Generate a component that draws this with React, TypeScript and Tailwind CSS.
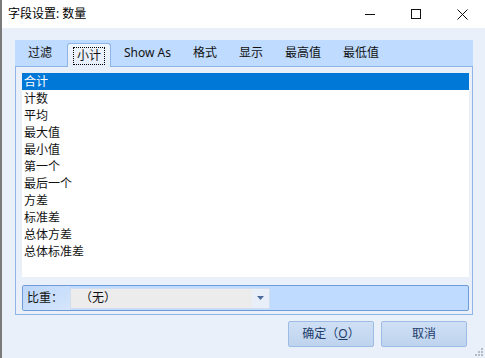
import React from "react";

const items = [
  "合计",
  "计数",
  "平均",
  "最大值",
  "最小值",
  "第一个",
  "最后一个",
  "方差",
  "标准差",
  "总体方差",
  "总体标准差",
];

const tabs = ["过滤", "小计", "Show As", "格式", "显示", "最高值", "最低值"];

function TitleBar() {
  return (
    <div className="h-[28px] bg-white flex items-center shrink-0">
      <span className="pl-[6px] text-[12px] leading-[16px] text-black">字段设置: 数量</span>
      <div className="ml-auto flex items-center h-full">
        <div className="w-[46px] h-full flex items-center justify-center">
          <svg width="10" height="10" viewBox="0 0 10 10">
            <line x1="0" y1="5.5" x2="10" y2="5.5" stroke="#111" strokeWidth="1" />
          </svg>
        </div>
        <div className="w-[46px] h-full flex items-center justify-center">
          <svg width="10" height="10" viewBox="0 0 10 10">
            <rect x="0.5" y="0.5" width="9" height="9" fill="none" stroke="#111" strokeWidth="1" />
          </svg>
        </div>
        <div className="w-[46px] h-full flex items-center justify-center">
          <svg width="11" height="11" viewBox="0 0 11 11">
            <path d="M0.5 0.5 L10.5 10.5 M10.5 0.5 L0.5 10.5" stroke="#111" strokeWidth="1" />
          </svg>
        </div>
      </div>
    </div>
  );
}

function TabStrip() {
  return (
    <div className="h-[26px] bg-[#bfdbff] flex items-end pl-[2px]">
      {tabs.map((t, i) =>
        i === 1 ? (
          <div
            key={t}
            className="ml-[4px] mr-[2px] h-[24px] mb-[-1px] px-[5px] flex items-center border border-b-0 border-[#8fb4e6] rounded-t-[3px] bg-gradient-to-b from-[#eef4fc] to-[#e6eef9] relative z-10"
          >
            <span className="px-[3px] h-[18px] flex items-center border border-dotted border-black text-[12px] leading-[16px] text-[#111]">
              {t}
            </span>
          </div>
        ) : (
          <div key={t} className="h-[26px] px-[11px] flex items-center text-[12px] leading-[16px] text-[#111]">
            {t}
          </div>
        )
      )}
    </div>
  );
}

export default function App() {
  return (
    <div
      className="w-[485px] h-[358px] flex flex-col bg-[#e9f0fa] border-l-2 border-[#7a7a7a] overflow-hidden relative"
      style={{ fontFamily: '"Noto Sans", "Noto Sans CJK SC", sans-serif' }}
    >
      <TitleBar />
      <div className="pt-[12px] pl-[13px] w-[471px]">
        <TabStrip />
        <div className="h-[249px] border border-[#8fb4e6] pl-[6px] pr-[3px] pt-[6px] pb-[3px] flex flex-col">
          <div className="h-[204px] bg-white">
            {items.map((it, i) => (
              <div
                key={it}
                className={
                  "h-[17px] pl-[2px] flex items-center text-[12px] leading-[16px] " +
                  (i === 0 ? "bg-[#0078d7] text-white" : "text-[#111]")
                }
              >
                {it}
              </div>
            ))}
          </div>
          <div className="mt-[8px] h-[26px] border border-[#6f9bd6] rounded-[2px] bg-[#bfdbff] flex items-center">
            <div className="w-[47px] h-full flex items-center pl-[4px] text-[12px] leading-[16px] text-[#111] bg-gradient-to-br from-[#bcd7fb] to-[#d6e6fb]">
              比重：
            </div>
            <div className="w-[200px] h-[21px] border border-[#d2deef] bg-[#ececec] flex items-center">
              <span className="pl-[9px] text-[12px] leading-[16px] text-[#111]">（无）</span>
              <div className="ml-auto w-[17px] h-full bg-[#e8eff9] flex items-center justify-center">
                <svg width="7" height="4" viewBox="0 0 7 4">
                  <path d="M0 0 H7 L3.5 4 Z" fill="#4b6c9c" />
                </svg>
              </div>
            </div>
          </div>
        </div>
        <div className="flex justify-end gap-[7px] pr-[6px] pt-[6px]">
          <button className="w-[86px] h-[26px] border border-[#9dbce5] rounded-[2px] bg-gradient-to-b from-[#cfe0f5] to-[#bed3ee] text-[12px] leading-[16px] text-[#1d3c6a]">
            确定（<span className="underline">O</span>）
          </button>
          <button className="w-[86px] h-[26px] border border-[#9dbce5] rounded-[2px] bg-gradient-to-b from-[#cfe0f5] to-[#bed3ee] text-[12px] leading-[16px] text-[#1d3c6a]">
            取消
          </button>
        </div>
      </div>
      <svg className="absolute right-[2px] bottom-[2px]" width="8" height="8" viewBox="0 0 8 8">
        <rect x="6" y="0" width="2" height="2" fill="#b5bcc6" />
        <rect x="3" y="3" width="2" height="2" fill="#b5bcc6" />
        <rect x="6" y="3" width="2" height="2" fill="#b5bcc6" />
        <rect x="0" y="6" width="2" height="2" fill="#b5bcc6" />
        <rect x="3" y="6" width="2" height="2" fill="#b5bcc6" />
        <rect x="6" y="6" width="2" height="2" fill="#b5bcc6" />
      </svg>
    </div>
  );
}
